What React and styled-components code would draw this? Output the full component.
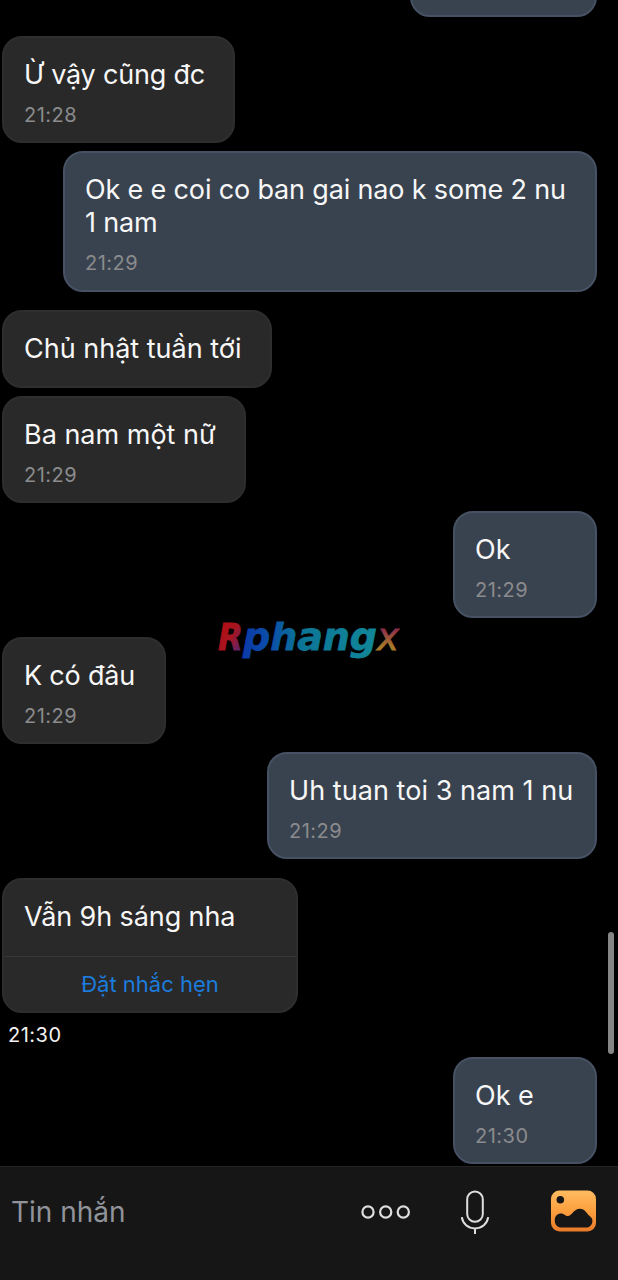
import React from "react";
import styled, { createGlobalStyle } from "styled-components";

const messages = [
  { id: 1, mine: true, width: 187, height: 107, gap: 0 },
  { id: 2, text: "Ừ vậy cũng đc", time: "21:28", width: 233, height: 107, gap: 19, tracking: -0.2 },
  {
    id: 3,
    mine: true,
    text: "Ok e e coi co ban gai nao k some 2 nu 1 nam",
    time: "21:29",
    width: 534,
    height: 141,
    gap: 8,
    tracking: -0.16,
  },
  { id: 4, text: "Chủ nhật tuần tới", width: 270, height: 78, gap: 18 },
  { id: 5, text: "Ba nam một nữ", time: "21:29", width: 244, height: 107, gap: 8 },
  { id: 6, mine: true, text: "Ok", time: "21:29", width: 144, height: 107, gap: 8 },
  { id: 7, text: "K có đâu", time: "21:29", width: 164, height: 107, gap: 19, tracking: -0.2 },
  {
    id: 8,
    mine: true,
    text: "Uh tuan toi 3 nam 1 nu",
    time: "21:29",
    width: 330,
    height: 107,
    gap: 8,
    tracking: 0.05,
  },
  {
    id: 9,
    text: "Vẫn 9h sáng nha",
    action: "Đặt nhắc hẹn",
    width: 296,
    height: 135,
    gap: 19,
    tracking: -0.1,
    sentAt: "21:30",
  },
  { id: 10, mine: true, text: "Ok e", time: "21:30", width: 144, height: 107, gap: 0 },
];

const Message = ({ message }) => (
  <>
    <Bubble $mine={message.mine} $width={message.width} $height={message.height} $gap={message.gap}>
      {message.text && <Text $tracking={message.tracking}>{message.text}</Text>}
      {message.time && <Time>{message.time}</Time>}
      {message.action && <Action>{message.action}</Action>}
    </Bubble>
    {message.sentAt && <SentAt>{message.sentAt}</SentAt>}
  </>
);

const Watermark = () => (
  <WatermarkSvg viewBox="0 0 200 50">
    <defs>
      <linearGradient id="wmRed" gradientUnits="userSpaceOnUse" x1="8" y1="20" x2="36" y2="34">
        <stop offset="0" stopColor="#b40d12" />
        <stop offset="0.5" stopColor="#a51522" />
        <stop offset="1" stopColor="#4a2a86" />
      </linearGradient>
      <linearGradient id="wmBlue" gradientUnits="userSpaceOnUse" x1="33" y1="0" x2="167" y2="0">
        <stop offset="0" stopColor="#0b3aa8" />
        <stop offset="0.22" stopColor="#0b50a8" />
        <stop offset="0.42" stopColor="#0c7596" />
        <stop offset="1" stopColor="#128799" />
      </linearGradient>
      <linearGradient id="wmGold" gradientUnits="userSpaceOnUse" x1="0" y1="19" x2="0" y2="40">
        <stop offset="0" stopColor="#8c2c4c" />
        <stop offset="0.8" stopColor="#a8782a" />
      </linearGradient>
    </defs>
    <WatermarkText x="8" y="40">
      <tspan textLength="25" lengthAdjust="spacingAndGlyphs" fill="url(#wmRed)" stroke="url(#wmRed)">R</tspan>
      <tspan textLength="134" lengthAdjust="spacingAndGlyphs" fill="url(#wmBlue)" stroke="url(#wmBlue)">phang</tspan>
      <tspan textLength="22" lengthAdjust="spacingAndGlyphs" fill="url(#wmGold)" stroke="url(#wmGold)" fontWeight="400">x</tspan>
    </WatermarkText>
  </WatermarkSvg>
);

const MoreIcon = () => (
  <svg width="50" height="17" viewBox="0 0 50 17" fill="none" stroke="#dedede" strokeWidth="2.2">
    <circle cx="7" cy="8" r="5.6" />
    <circle cx="24.7" cy="8" r="5.6" />
    <circle cx="42.3" cy="8" r="5.6" />
  </svg>
);

const MicIcon = () => (
  <svg width="30" height="46" viewBox="0 0 30 46" fill="none" stroke="#dedede" strokeWidth="2">
    <rect x="7.2" y="2.4" width="15.6" height="30.4" rx="7.8" />
    <path d="M1.8 28.2C2.8 35 8 39.4 15 39.4S27.2 35 28.2 28.2M15 39.4V45" />
  </svg>
);

const PictureIcon = () => (
  <svg width="46" height="44" viewBox="0 0 46 44">
    <defs>
      <linearGradient id="picture" x1="0" y1="0" x2="0" y2="1">
        <stop offset="0" stopColor="#ffbc61" />
        <stop offset="0.5" stopColor="#fb9f3e" />
        <stop offset="1" stopColor="#e87a2a" />
      </linearGradient>
    </defs>
    <rect x="0" y="0.5" width="45" height="41" rx="8.5" fill="url(#picture)" />
    <circle cx="9.3" cy="9.8" r="3.8" fill="#161616" />
    <path
      d="M3.8 29.5C3.8 26 6.6 23.4 10 23.4C13.1 23.4 14.1 26 16.9 26C21.1 26 22.6 18.8 28.8 18.8C34 18.8 35.5 23.5 38.6 26C40.6 27.6 41.4 29 41.4 31C41.4 35 38.6 37.6 34.8 37.6H10.4C6.6 37.6 3.8 34.5 3.8 31Z"
      fill="#161616"
    />
  </svg>
);

const App = () => {
  return (
    <Screen>
      <GlobalStyle />
      <Conversation>
        {messages.map((message) => (
          <Message key={message.id} message={message} />
        ))}
      </Conversation>
      <Composer>
        <Placeholder>Tin nhắn</Placeholder>
        <Tools>
          <MoreIcon />
          <MicIcon />
          <PictureIcon />
        </Tools>
      </Composer>
      <Watermark />
      <ScrollThumb />
    </Screen>
  );
};

export default App;

const GlobalStyle = createGlobalStyle`
  * {
    box-sizing: border-box;
  }
  body {
    margin: 0;
    background-color: #000;
    font-family: Inter, "Noto Sans", sans-serif;
  }
`;

const Screen = styled.div`
  position: relative;
  display: flex;
  flex-direction: column;
  width: 618px;
  height: 1280px;
  overflow: hidden;
  background-color: #000;
`;

const Conversation = styled.main`
  display: flex;
  flex: 1;
  flex-direction: column;
  justify-content: flex-end;
  min-height: 0;
  padding: 0 21px 2px 2px;
  overflow: hidden;
`;

const Bubble = styled.div`
  display: flex;
  flex-direction: column;
  flex-shrink: 0;
  align-self: ${(props) => (props.$mine ? "flex-end" : "flex-start")};
  width: ${(props) => props.$width}px;
  height: ${(props) => props.$height}px;
  margin-top: ${(props) => props.$gap}px;
  padding-top: 20px;
  border: 2px solid ${(props) => (props.$mine ? "#465163" : "#2e2e2e")};
  border-radius: 20px;
  background-color: ${(props) => (props.$mine ? "#39434f" : "#292929")};
  overflow: hidden;
`;

const Text = styled.p`
  margin: 0;
  padding: 0 18px 0 20px;
  color: #f7f7f7;
  font-size: 27px;
  line-height: 33px;
  letter-spacing: ${(props) => props.$tracking || 0}px;
`;

const Time = styled.time`
  margin-top: 12px;
  padding-left: 20px;
  color: #8b8b8e;
  font-size: 20px;
  line-height: 24px;
  letter-spacing: 0.5px;
`;

const Action = styled.button`
  height: 55px;
  margin-top: auto;
  border: 0;
  border-top: 1px solid #363636;
  background: none;
  color: #1c7cdc;
  font-family: inherit;
  font-size: 22px;
`;

const SentAt = styled.time`
  flex-shrink: 0;
  height: 44px;
  padding: 10px 0 0 6px;
  color: #f2f2f2;
  font-size: 20px;
  line-height: 24px;
  letter-spacing: 0.5px;
`;

const Composer = styled.footer`
  display: flex;
  justify-content: space-between;
  height: 114px;
  padding: 22px 21px 0 11px;
  border-top: 1px solid #222;
  background-color: #161616;
`;

const Placeholder = styled.span`
  color: #90939a;
  font-size: 28px;
  line-height: 46px;
`;

const Tools = styled.div`
  display: flex;
  align-items: center;
  height: 46px;

  svg:nth-child(2) {
    margin: 0 61px 0 49px;
  }
`;

const WatermarkSvg = styled.svg`
  position: absolute;
  top: 610px;
  left: 210px;
  width: 200px;
  height: 50px;
`;

const WatermarkText = styled.text`
  font-family: "DejaVu Sans", sans-serif;
  font-size: 38px;
  font-style: italic;
  font-weight: 700;
  stroke-width: 0.8px;
`;

const ScrollThumb = styled.div`
  position: absolute;
  top: 932px;
  right: 4px;
  width: 6px;
  height: 122px;
  border-radius: 3px;
  background-color: #858585;
`;
